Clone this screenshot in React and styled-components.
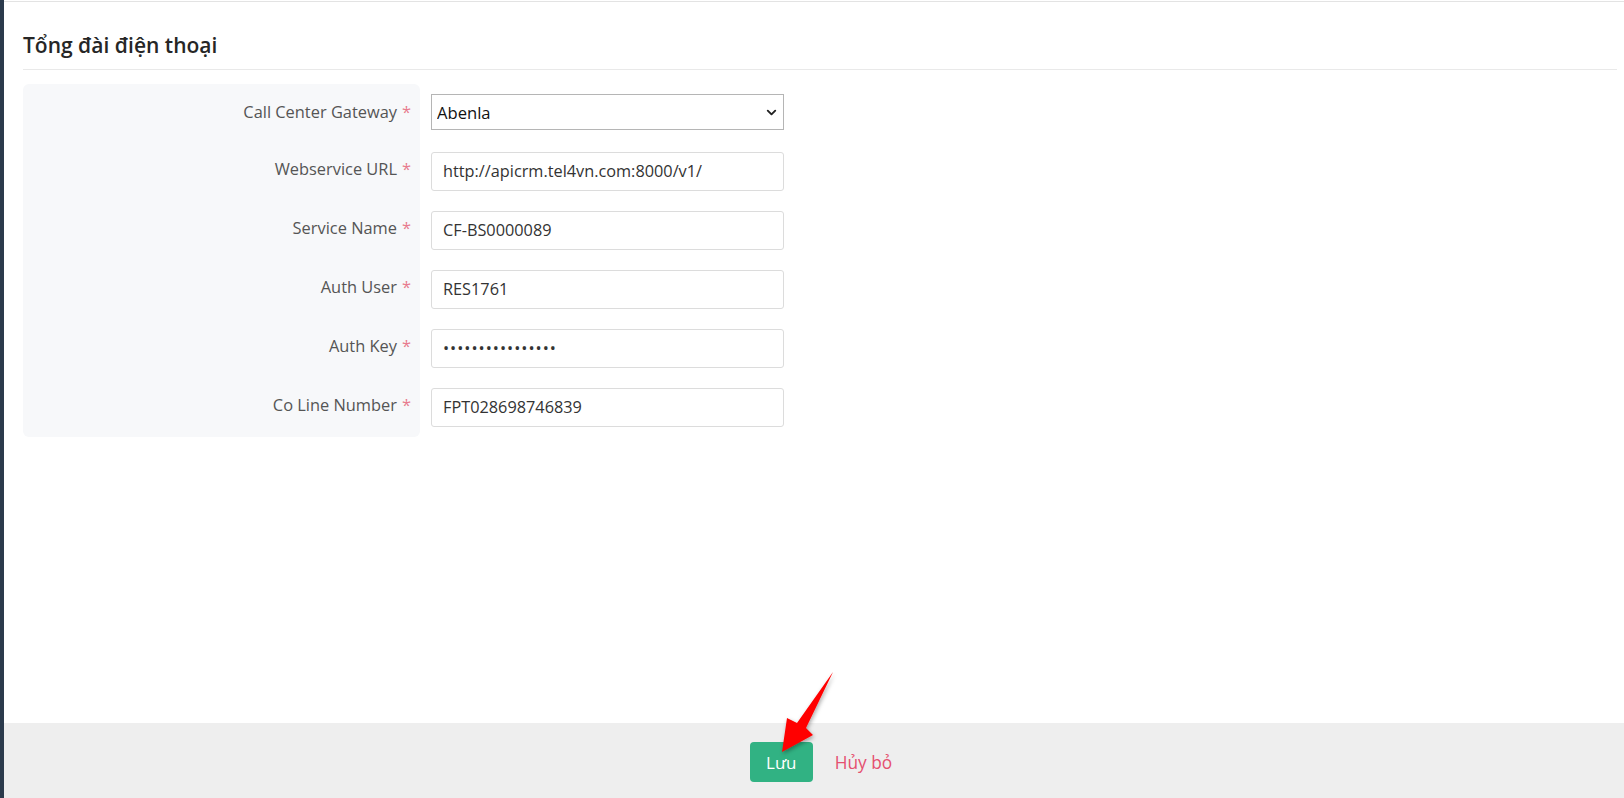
import React from "react";
import styled, { createGlobalStyle } from "styled-components";
import { ChevronDown } from "lucide-react";

const Global = createGlobalStyle`
  * { box-sizing: border-box; }
  html, body { margin: 0; padding: 0; height: 100%; }
  body {
    font-family: "Open Sans", "Noto Sans", Arial, sans-serif;
    background: #fff;
    overflow: hidden;
  }
`;

const Page = styled.div`
  display: flex;
  height: 100vh;
  position: relative;
`;

const SideEdge = styled.div`
  width: 4px;
  flex: 0 0 4px;
  background: #2b3a4c;
`;

const Main = styled.div`
  flex: 1;
  display: flex;
  flex-direction: column;
  border-top: 1px solid #e3e3e3;
  margin-top: 1px;
`;

const Content = styled.div`
  flex: 1;
  padding: 0 7px 0 19px;
`;

const Title = styled.h2`
  margin: 0;
  padding: 28px 0 9px 0;
  font-size: 21px;
  font-weight: 600;
  color: #262626;
  line-height: 30px;
  border-bottom: 1px solid #e9e9e9;
`;

const FormGrid = styled.div`
  display: flex;
  margin-top: 14px;
  gap: 11px;
`;

const LabelColumn = styled.div`
  width: 397px;
  background: #f7f8fa;
  border-radius: 6px;
  padding: 10px 9px 10px 0;
  display: flex;
  flex-direction: column;
  gap: 20px;
`;

const FieldColumn = styled.div`
  width: 353px;
  padding: 10px 0;
  display: flex;
  flex-direction: column;
  gap: 20px;
`;

const Label = styled.div`
  height: ${(p) => p.$h}px;
  margin-bottom: ${(p) => p.$mb || 0}px;
  padding-bottom: ${(p) => p.$pb}px;
  display: flex;
  align-items: center;
  justify-content: flex-end;
  font-size: 16.4px;
  color: #555;
`;

const Star = styled.span`
  color: #e87b8e;
  margin-left: 5px;
`;

const SelectWrap = styled.div`
  position: relative;
  height: 36px;
  margin-bottom: 1.5px;
`;

const Select = styled.select`
  appearance: none;
  width: 100%;
  height: 36px;
  border: 1px solid #b5b5b5;
  border-radius: 0;
  background: #fff;
  padding: 0 0 0 5px;
  font-family: "Open Sans", "Noto Sans", Arial, sans-serif;
  font-size: 16.6px;
  color: #111;
  outline: none;
`;

const Chevron = styled(ChevronDown)`
  position: absolute;
  right: 5px;
  top: 11px;
  pointer-events: none;
  color: #222;
`;

const Input = styled.input`
  width: 100%;
  height: 39px;
  border: 1px solid #dcdcdc;
  border-radius: 3px;
  padding: 0 11px;
  font-family: "Open Sans", "Noto Sans", Arial, sans-serif;
  font-size: 16.3px;
  letter-spacing: ${(p) => (p.type === "password" ? "1px" : "0")};
  color: #333;
  background: #fff;
  outline: none;
`;

const Footer = styled.div`
  height: 75px;
  flex: 0 0 75px;
  background: #eeeeee;
  display: flex;
  justify-content: center;
  align-items: flex-start;
  padding: 19px 0 0 14px;
  gap: 22px;
`;

const SaveButton = styled.button`
  width: 63px;
  height: 40px;
  border: none;
  border-radius: 4px;
  background: #31b283;
  color: #fff;
  font-family: "Open Sans", "Noto Sans", Arial, sans-serif;
  font-size: 16.9px;
  cursor: pointer;
`;

const CancelLink = styled.a`
  height: 40px;
  display: flex;
  align-items: center;
  font-size: 17.3px;
  color: #e5506f;
  text-decoration: none;
  cursor: pointer;
`;

const Arrow = styled.svg`
  position: absolute;
  left: 0;
  top: 0;
  pointer-events: none;
  overflow: visible;
`;

const fields = [
  { label: "Call Center Gateway", type: "select", value: "Abenla" },
  { label: "Webservice URL", value: "http://apicrm.tel4vn.com:8000/v1/" },
  { label: "Service Name", value: "CF-BS0000089" },
  { label: "Auth User", value: "RES1761" },
  { label: "Auth Key", value: "abcdefghijklmnop", type: "password" },
  { label: "Co Line Number", value: "FPT028698746839" },
];

export default function App() {
  return (
    <>
      <Global />
      <Page>
        <SideEdge />
        <Main>
          <Content>
            <Title>Tổng đài điện thoại</Title>
            <FormGrid>
              <LabelColumn>
                {fields.map((f) => (
                  <Label
                    key={f.label}
                    $h={f.type === "select" ? 36 : 39}
                    $mb={f.type === "select" ? 1.5 : 0}
                    $pb={f.type === "select" ? 2 : 5}
                  >
                    {f.label}
                    <Star>*</Star>
                  </Label>
                ))}
              </LabelColumn>
              <FieldColumn>
                {fields.map((f) =>
                  f.type === "select" ? (
                    <SelectWrap key={f.label}>
                      <Select defaultValue={f.value}>
                        <option>Abenla</option>
                      </Select>
                      <Chevron size={15} strokeWidth={3} />
                    </SelectWrap>
                  ) : (
                    <Input
                      key={f.label}
                      type={f.type || "text"}
                      defaultValue={f.value}
                    />
                  )
                )}
              </FieldColumn>
            </FormGrid>
          </Content>
          <Footer>
            <SaveButton>Lưu</SaveButton>
            <CancelLink>Hủy bỏ</CancelLink>
          </Footer>
        </Main>
        <Arrow width="1624" height="798">
          <defs>
            <filter id="sh" x="-50%" y="-50%" width="200%" height="200%">
              <feDropShadow dx="1" dy="2" stdDeviation="2" floodColor="#000" floodOpacity="0.35" />
            </filter>
          </defs>
          <polygon
            points="833,672 806,728 813,735 782,752 787,718 797,723"
            fill="#ff0000"
            filter="url(#sh)"
          />
        </Arrow>
      </Page>
    </>
  );
}
